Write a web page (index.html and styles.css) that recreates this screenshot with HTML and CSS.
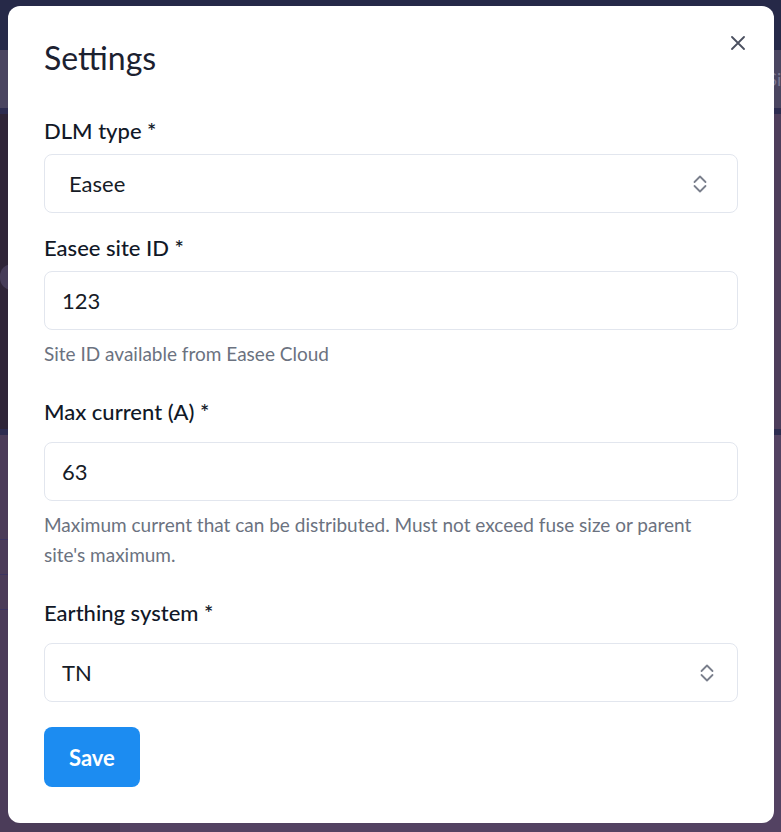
FILE: index.html
```html
<!DOCTYPE html>
<html>

<head>
    <title>Settings</title>
    <meta charset="utf-8">
    <meta name="viewport" content="width=device-width, initial-scale=1.0">
    <link rel="stylesheet" href="styles.css">
</head>

<body>

    <div class="page">
        <div class="topbar"></div>
        <div class="subbar"><span class="subbar-text">Sites</span></div>
        <div class="divider"></div>
        <div class="content">
            <div class="side"><div class="side-pill"></div></div>
            <div class="main"></div>
        </div>
        <div class="divider"></div>
        <div class="lower">
            <div class="side">
                <div class="row"></div>
                <div class="row"></div>
                <div class="row"></div>
            </div>
            <div class="main"></div>
        </div>
    </div>

    <div class="backdrop">
        <div class="modal">
            <h2 class="modal-title">Settings</h2>
            <button class="close" aria-label="Close">
                <svg width="14" height="14" viewBox="0 0 14 14">
                    <path d="M1 1 L13 13 M13 1 L1 13" stroke="#4b5060" stroke-width="1.8" stroke-linecap="round" fill="none" />
                </svg>
            </button>

            <form class="form">
                <div class="group">
                    <label class="label">DLM type *</label>
                    <div class="field select wide">
                        <span>Easee</span>
                        <svg class="chevrons" width="14" height="20" viewBox="0 0 14 20">
                            <path d="M1.5 8 L7 2.5 L12.5 8 M1.5 12 L7 17.5 L12.5 12" stroke="#7a7f8c" stroke-width="1.8" stroke-linecap="round" stroke-linejoin="round" fill="none" />
                        </svg>
                    </div>
                </div>

                <div class="group">
                    <label class="label">Easee site ID *</label>
                    <div class="field">123</div>
                    <p class="help">Site ID available from Easee Cloud</p>
                </div>

                <div class="group">
                    <label class="label spaced">Max current (A) *</label>
                    <div class="field">63</div>
                    <p class="help">Maximum current that can be distributed. Must not exceed fuse size or parent site's maximum.</p>
                </div>

                <div class="group">
                    <label class="label spaced">Earthing system *</label>
                    <div class="field select">
                        <span>TN</span>
                        <svg class="chevrons" width="14" height="20" viewBox="0 0 14 20">
                            <path d="M1.5 8 L7 2.5 L12.5 8 M1.5 12 L7 17.5 L12.5 12" stroke="#7a7f8c" stroke-width="1.8" stroke-linecap="round" stroke-linejoin="round" fill="none" />
                        </svg>
                    </div>
                </div>

                <div>
                    <button type="button" class="save">Save</button>
                </div>
            </form>
        </div>
    </div>

</body>

</html>
```

FILE: styles.css
```css
body {
    margin: 0;
    font-family: "Lato", "Noto Sans", sans-serif;
    background-color: #4c3d5a;
}

/* dimmed page behind the dialog */

.page {
    height: 832px;
    overflow: hidden;
}

.topbar {
    height: 50px;
    background-color: #262948;
}

.subbar {
    height: 58px;
    background-color: #4a4560;
    display: flex;
    align-items: center;
    justify-content: flex-end;
}

.subbar-text {
    color: #7d7890;
    font-size: 18px;
    margin-right: -24px;
}

.divider {
    height: 6px;
    background-color: #2d2c50;
}

.content {
    display: flex;
    height: 315px;
}

.content .side {
    width: 120px;
    background-color: #2f2538;
    padding-top: 150px;
}

.side-pill {
    height: 26px;
    width: 40px;
    border-radius: 12px;
    background-color: #463c58;
}

.content .main {
    flex: 1;
    background-color: #4d3d5b;
}

.lower {
    display: flex;
    height: 450px;
}

.lower .side {
    width: 120px;
    background-color: #4b3c59;
    padding-top: 104px;
}

.row {
    height: 1px;
    background-color: #3c3562;
    margin-bottom: 34px;
}

.lower .main {
    flex: 1;
    background-color: #534262;
}

/* dialog */

.backdrop {
    position: fixed;
    inset: 0;
    padding: 6px 7px 9px 8px;
}

.modal {
    position: relative;
    box-sizing: border-box;
    height: 817px;
    background-color: #ffffff;
    border-radius: 12px;
    padding: 36px;
}

.modal-title {
    margin: 0;
    font-size: 32px;
    line-height: 32px;
    font-weight: 400;
    color: #1c2130;
}

.close {
    position: absolute;
    top: 23px;
    right: 22px;
    width: 28px;
    height: 28px;
    border: none;
    background: none;
    padding: 0;
    display: flex;
    align-items: center;
    justify-content: center;
}

.form {
    margin-top: 43px;
    display: flex;
    flex-direction: column;
    gap: 21px;
}

.label {
    display: block;
    font-size: 22px;
    line-height: 28px;
    font-weight: 500;
    color: #111827;
    margin-bottom: 9px;
}

.label.spaced {
    margin-bottom: 16px;
}

.field {
    box-sizing: border-box;
    height: 59px;
    border: 1px solid #e2e6ee;
    border-radius: 8px;
    padding: 0 17px;
    display: flex;
    align-items: center;
    font-size: 22px;
    color: #161b26;
}

.select {
    justify-content: space-between;
    padding-right: 23px;
}

.select.wide {
    padding-left: 24px;
    padding-right: 30px;
}

.help {
    margin: 9px 0 8px;
    padding-right: 10px;
    font-size: 19px;
    line-height: 30px;
    color: #6b7280;
}

.save {
    margin-top: 4px;
    height: 60px;
    padding: 0 25px;
    border: none;
    border-radius: 8px;
    background-color: #1c8cf1;
    color: #ffffff;
    font-family: "Lato", "Noto Sans", sans-serif;
    font-size: 22px;
    font-weight: 700;
}
```
